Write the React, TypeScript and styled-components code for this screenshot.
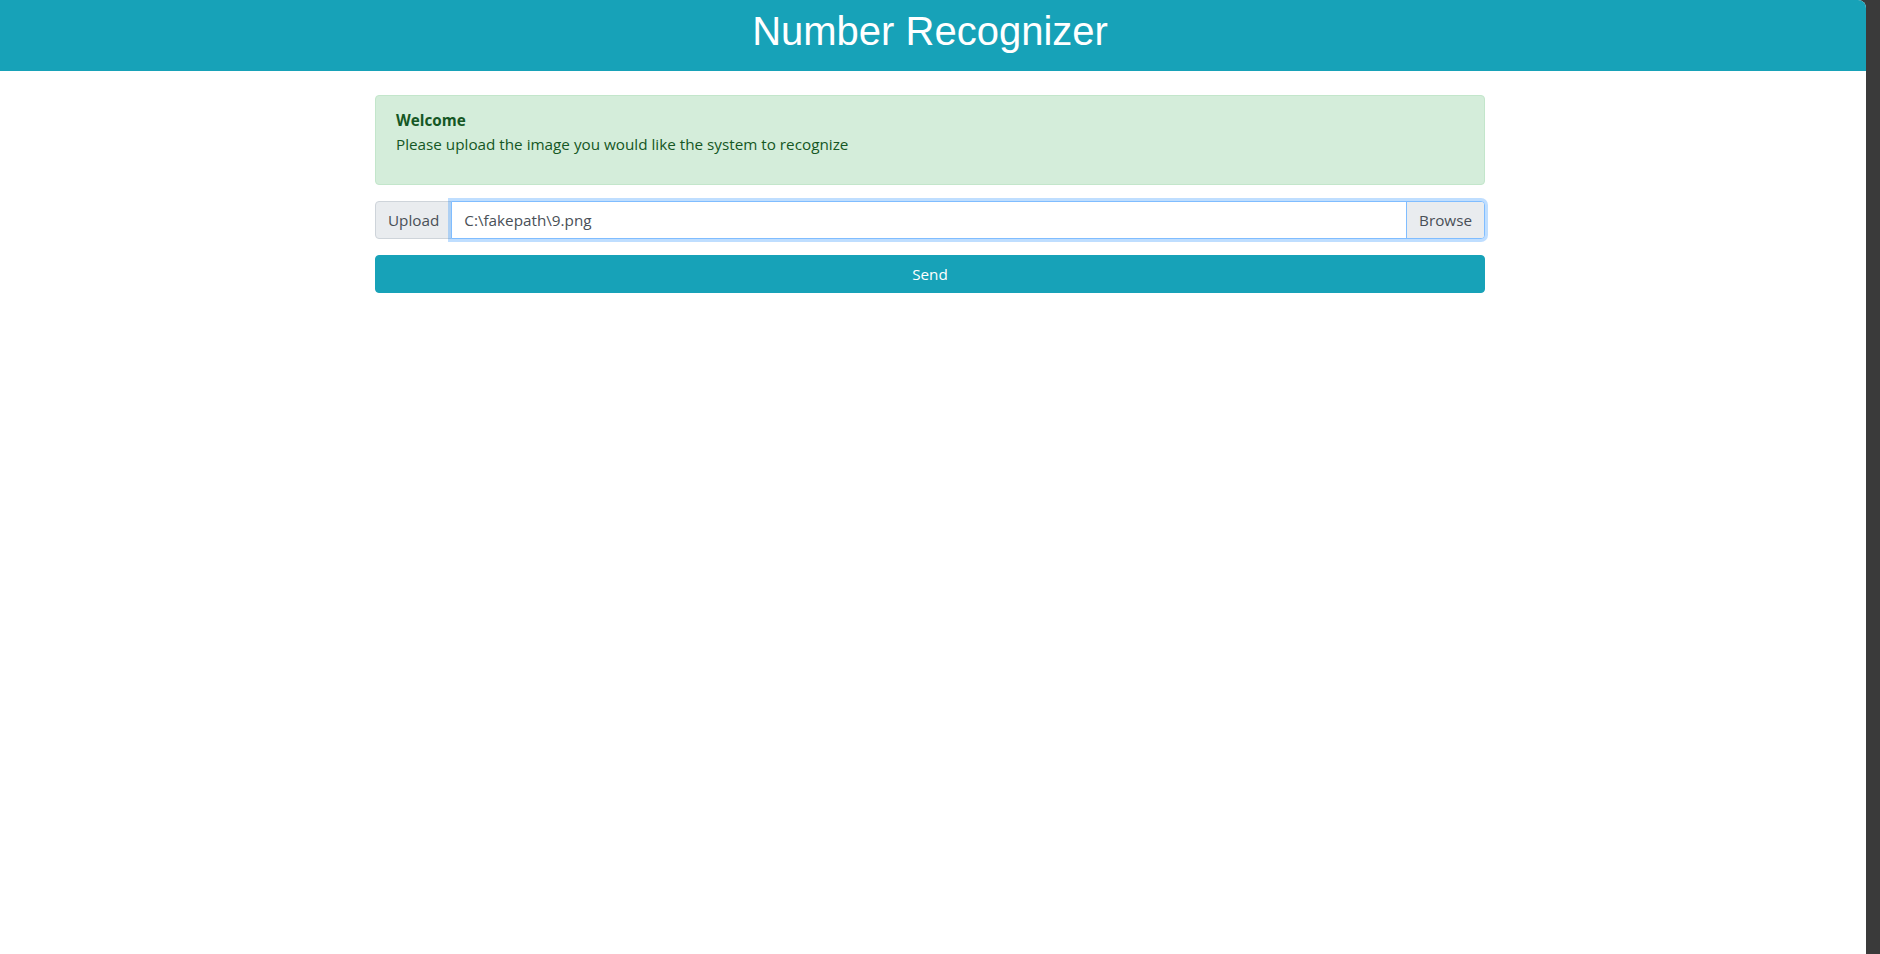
import React from 'react';
import styled, { createGlobalStyle } from 'styled-components';

const GlobalStyle = createGlobalStyle`
    html, body {
        margin: 0;
        padding: 0;
        background: #3a3a3a;
    }
    * {
        box-sizing: border-box;
    }
`;

const Screen = styled.div`
    display: flex;
    height: 954px;
    overflow: hidden;
`;

const Page = styled.div`
    width: 1866px;
    flex-shrink: 0;
    background: #ffffff;
    border-top-right-radius: 8px;
    overflow: hidden;
    font-family: 'Open Sans', 'Noto Sans', sans-serif;
    font-size: 15.25px;
    line-height: 24px;
    color: #212529;
`;

const SideStrip = styled.div`
    flex: 1;
    background: #3a3a3a;
`;

const Header = styled.header`
    height: 71px;
    background: #17a2b8;
    padding: 7px 6px 0 0;
    text-align: center;
`;

const Title = styled.h1`
    margin: 0;
    font-family: 'Liberation Sans', Arial, sans-serif;
    font-size: 40px;
    font-weight: 400;
    line-height: 48px;
    color: #ffffff;
`;

const Content = styled.main`
    padding: 24px 6px 0 0;
`;

const Container = styled.div`
    max-width: 1110px;
    margin: 0 auto;
`;

const Alert = styled.div`
    padding: 12px 20px;
    margin-bottom: 16px;
    background: #d4edda;
    border: 1px solid #c3e6cb;
    border-radius: 4px;
    color: #155724;
`;

const AlertHeading = styled.strong`
    display: block;
    font-weight: 700;
`;

const AlertText = styled.p`
    margin: 0 0 16px;
`;

const InputGroup = styled.div`
    display: flex;
    height: 38px;
    margin-bottom: 16px;
`;

const Addon = styled.span`
    display: flex;
    align-items: center;
    padding: 6px 12px;
    margin-right: -1px;
    background: #e9ecef;
    border: 1px solid #ced4da;
    border-radius: 4px 0 0 4px;
    color: #495057;
    white-space: nowrap;
`;

const FileLabel = styled.label`
    position: relative;
    z-index: 1;
    flex: 1;
    display: flex;
    align-items: stretch;
    background: #ffffff;
    border: 1px solid #80bdff;
    border-radius: 0 4px 4px 0;
    box-shadow: 0 0 0 3px rgba(0, 123, 255, 0.25);
    color: #495057;
    overflow: hidden;
`;

const FileName = styled.span`
    flex: 1;
    display: flex;
    align-items: center;
    padding: 0 12px;
`;

const BrowseButton = styled.span`
    display: flex;
    align-items: center;
    padding: 0 12px;
    background: #e9ecef;
    border-left: 1px solid #80bdff;
    color: #495057;
`;

const SendButton = styled.button`
    display: block;
    width: 100%;
    height: 38px;
    padding: 6px 12px;
    background: #17a2b8;
    border: 1px solid #17a2b8;
    border-radius: 4px;
    color: #ffffff;
    font-family: inherit;
    font-size: inherit;
    line-height: 24px;
    cursor: pointer;
`;

const App: React.FC = () => {
    return (
        <>
            <GlobalStyle />
            <Screen>
                <Page>
                    <Header>
                        <Title>Number Recognizer</Title>
                    </Header>
                    <Content>
                        <Container>
                            <Alert>
                                <AlertHeading>Welcome</AlertHeading>
                                <AlertText>Please upload the image you would like the system to recognize</AlertText>
                            </Alert>
                            <InputGroup>
                                <Addon>Upload</Addon>
                                <FileLabel>
                                    <FileName>C:\fakepath\9.png</FileName>
                                    <BrowseButton>Browse</BrowseButton>
                                </FileLabel>
                            </InputGroup>
                            <SendButton type="button">Send</SendButton>
                        </Container>
                    </Content>
                </Page>
                <SideStrip />
            </Screen>
        </>
    );
};

export default App;
